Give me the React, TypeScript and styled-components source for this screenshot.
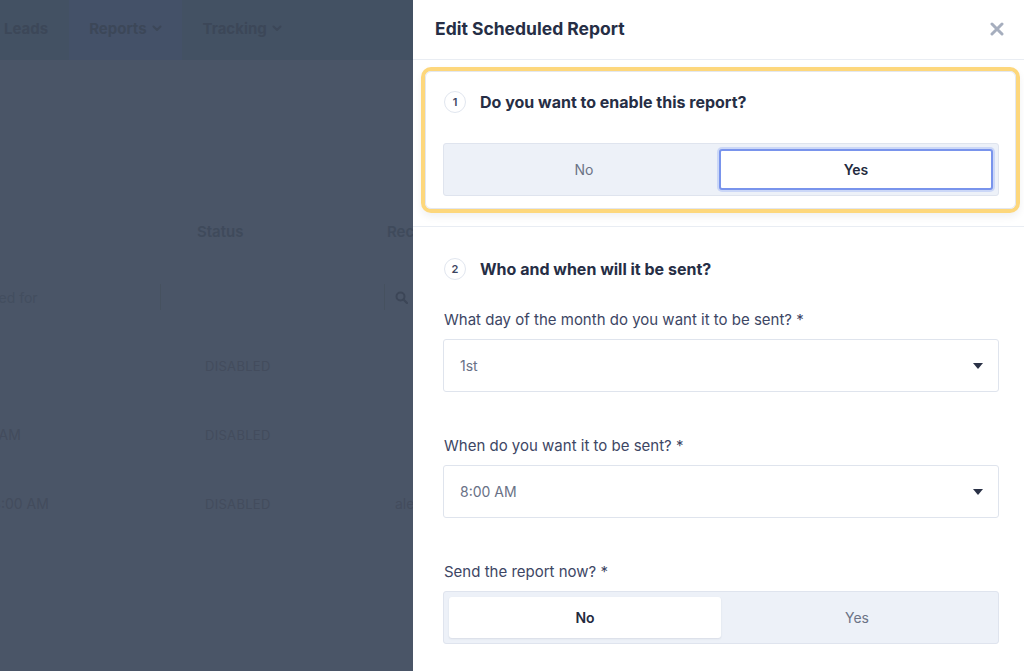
import React from "react";
import styled, { createGlobalStyle, css } from "styled-components";

const Global = createGlobalStyle`
  html, body { margin: 0; padding: 0; }
  body {
    font-family: Inter, "Noto Sans", "Liberation Sans", sans-serif;
    -webkit-font-smoothing: antialiased;
  }
  * { box-sizing: border-box; }
`;

const Page = styled.div`
  display: flex;
  width: 1024px;
  height: 671px;
  overflow: hidden;
`;

/* ---------- dimmed background app ---------- */
const Backdrop = styled.div`
  flex: 0 0 413px;
  background: #4a5567;
  overflow: hidden;
  display: flex;
  flex-direction: column;
`;

const NavBar = styled.nav`
  height: 60px;
  flex: 0 0 60px;
  background: #435163;
  display: flex;
  margin-left: -16px;
`;

const NavItem = styled.div<{ $active?: boolean }>`
  display: flex;
  align-items: center;
  gap: 5px;
  padding: 0 20px 4px;
  font-size: 15px;
  font-weight: 700;
  color: #3c4758;
  white-space: nowrap;
  ${(p) =>
    p.$active &&
    css`
      background: #445168;
    `}
  & + & {
    margin-left: 1px;
  }
`;

const Main = styled.div`
  padding-top: 151px;
  margin-left: -140px;
  display: flex;
  flex-direction: column;
`;

const TableRow = styled.div<{ $h: number }>`
  display: grid;
  grid-template-columns: 301px 224px 1fr;
  height: ${(p) => p.$h}px;
  align-items: center;
  white-space: nowrap;
`;

const HeadCell = styled.div<{ $pad?: number }>`
  font-size: 15px;
  font-weight: 600;
  color: #3f4a5b;
  padding-left: ${(p) => p.$pad ?? 0}px;
`;

const SearchRow = styled.div`
  display: grid;
  grid-template-columns: 301px 224px 1fr;
  height: 26px;
  margin: 33px 0 21px;
`;

const SearchCell = styled.div<{ $divider?: boolean; $pad: number }>`
  display: flex;
  align-items: center;
  padding-left: ${(p) => p.$pad}px;
  font-size: 14px;
  color: #434e5f;
  border-right: ${(p) => (p.$divider ? "1px solid #46515f" : "none")};
  white-space: nowrap;
`;

const BodyCell = styled.div<{ $pad?: number; $upper?: boolean }>`
  font-size: ${(p) => (p.$upper ? 13 : 14)}px;
  color: #434c5d;
  padding-left: ${(p) => p.$pad ?? 0}px;
  letter-spacing: ${(p) => (p.$upper ? "0.3px" : "0")};
`;

/* ---------- drawer ---------- */
const Drawer = styled.aside`
  flex: 1;
  background: #ffffff;
  display: flex;
  flex-direction: column;
`;

const DrawerHeader = styled.header`
  height: 60px;
  flex: 0 0 60px;
  border-bottom: 1px solid #e9edf3;
  display: flex;
  align-items: center;
  justify-content: space-between;
  padding: 0 19px 2px 22px;
`;

const DrawerTitle = styled.h1`
  margin: 0;
  font-size: 17.5px;
  font-weight: 700;
  color: #262e45;
`;

const CloseButton = styled.button`
  border: 0;
  background: none;
  padding: 0;
  width: 16px;
  height: 16px;
  display: flex;
  align-items: center;
  justify-content: center;
  cursor: pointer;
`;

const HighlightSection = styled.section`
  padding: 11px 8px 17px 12px;
  border-bottom: 1px solid #e9edf3;
`;

const HighlightCard = styled.div`
  border: 1px solid #e3e7ef;
  border-radius: 6px;
  padding: 19px 16px 12px 17px;
  box-shadow: 0 0 0 4px #fdd77c, 0 4px 8px 3px rgba(30, 40, 60, 0.08);
`;

const Section = styled.section`
  padding: 31px 25px 0 30px;
  display: flex;
  flex-direction: column;
`;

const StepHeader = styled.div<{ $gap: number }>`
  display: flex;
  align-items: center;
  gap: 14px;
  height: 22px;
  margin-bottom: ${(p) => p.$gap}px;
`;

const StepNumber = styled.span`
  width: 22px;
  height: 22px;
  border-radius: 50%;
  border: 1px solid #e1e6ef;
  display: flex;
  align-items: center;
  justify-content: center;
  font-size: 11px;
  font-weight: 600;
  color: #3c4560;
  margin-left: 1px;
`;

const StepTitle = styled.h2`
  margin: 0;
  font-size: 16px;
  font-weight: 700;
  color: #262e45;
  letter-spacing: 0;
`;

const Fields = styled.div`
  display: flex;
  flex-direction: column;
  gap: 44px;
`;

const Field = styled.div`
  display: flex;
  flex-direction: column;
  gap: 9px;
`;

const Label = styled.label`
  font-size: 15px;
  line-height: 20px;
  color: #3d4664;
  padding-left: 1px;
`;

const SelectBox = styled.div`
  height: 53px;
  border: 1px solid #dfe4ed;
  border-radius: 3px;
  display: flex;
  align-items: center;
  justify-content: space-between;
  padding: 0 15px 0 16px;
  font-size: 14px;
  color: #697186;
`;

const Segmented = styled.div`
  height: 53px;
  background: #edf1f8;
  border: 1px solid #dfe4ee;
  border-radius: 3px;
  padding: 5px;
  display: flex;
`;

const SegmentOption = styled.button<{ $selected?: boolean; $focused?: boolean }>`
  flex: 1;
  border: 0;
  border-radius: 3px;
  background: transparent;
  font-family: inherit;
  font-size: 14px;
  color: #6b7386;
  cursor: pointer;
  ${(p) =>
    p.$selected &&
    css`
      background: #ffffff;
      font-weight: 600;
      color: #232a3e;
      box-shadow: 0 1px 2px rgba(30, 40, 70, 0.1);
    `}
  ${(p) =>
    p.$focused &&
    css`
      border: 2px solid #7994ec;
      box-shadow: 0 0 0 2px rgba(127, 156, 245, 0.3);
    `}
`;

const Caret = () => (
  <svg width="10" height="6" viewBox="0 0 10 6">
    <path d="M0 0h10L5 6z" fill="#2a3146" />
  </svg>
);

const Chevron = () => (
  <svg width="10" height="7" viewBox="0 0 10 7">
    <path d="M1.5 1.5L5 5l3.5-3.5" fill="none" stroke="#3c4758" strokeWidth="2" strokeLinecap="round" strokeLinejoin="round" />
  </svg>
);

const SearchIcon = () => (
  <svg width="13" height="13" viewBox="0 0 13 13">
    <circle cx="5.5" cy="5.5" r="4" fill="none" stroke="#3c4657" strokeWidth="2" />
    <path d="M8.5 8.5L12 12" stroke="#3c4657" strokeWidth="2.2" strokeLinecap="round" />
  </svg>
);

const CloseIcon = () => (
  <svg width="14" height="14" viewBox="0 0 14 14">
    <path d="M2 2l10 10M12 2L2 12" stroke="#a6aebe" strokeWidth="3" strokeLinecap="round" />
  </svg>
);

export default function App() {
  return (
    <>
      <Global />
      <Page>
        <Backdrop>
          <NavBar>
            <NavItem>Leads</NavItem>
            <NavItem $active>
              Reports <Chevron />
            </NavItem>
            <NavItem>
              Tracking <Chevron />
            </NavItem>
          </NavBar>
          <Main>
            <TableRow $h={40}>
              <HeadCell $pad={20}>Schedule</HeadCell>
              <HeadCell $pad={36}>Status</HeadCell>
              <HeadCell $pad={2}>Recipients</HeadCell>
            </TableRow>
            <SearchRow>
              <SearchCell $divider $pad={36}>Search scheduled for</SearchCell>
              <SearchCell $divider $pad={20} />
              <SearchCell $pad={10}>
                <SearchIcon />
              </SearchCell>
            </SearchRow>
            <TableRow $h={69}>
              <BodyCell $pad={20}>Monthly</BodyCell>
              <BodyCell $pad={44} $upper>DISABLED</BodyCell>
              <BodyCell $pad={10}></BodyCell>
            </TableRow>
            <TableRow $h={69}>
              <BodyCell $pad={20}>Weekly, Tue 9:00 AM</BodyCell>
              <BodyCell $pad={44} $upper>DISABLED</BodyCell>
              <BodyCell $pad={10}></BodyCell>
            </TableRow>
            <TableRow $h={69}>
              <BodyCell $pad={20}>Monthly, 15th, at 8:00 AM</BodyCell>
              <BodyCell $pad={44} $upper>DISABLED</BodyCell>
              <BodyCell $pad={10}>alex@example.com</BodyCell>
            </TableRow>
          </Main>
        </Backdrop>

        <Drawer>
          <DrawerHeader>
            <DrawerTitle>Edit Scheduled Report</DrawerTitle>
            <CloseButton aria-label="Close">
              <CloseIcon />
            </CloseButton>
          </DrawerHeader>

          <HighlightSection>
            <HighlightCard>
              <StepHeader $gap={30}>
                <StepNumber>1</StepNumber>
                <StepTitle>Do you want to enable this report?</StepTitle>
              </StepHeader>
              <Segmented>
                <SegmentOption>No</SegmentOption>
                <SegmentOption $selected $focused>
                  Yes
                </SegmentOption>
              </Segmented>
            </HighlightCard>
          </HighlightSection>

          <Section>
            <StepHeader $gap={30}>
              <StepNumber>2</StepNumber>
              <StepTitle>Who and when will it be sent?</StepTitle>
            </StepHeader>
            <Fields>
              <Field>
                <Label>What day of the month do you want it to be sent? *</Label>
                <SelectBox>
                  1st
                  <Caret />
                </SelectBox>
              </Field>
              <Field>
                <Label>When do you want it to be sent? *</Label>
                <SelectBox>
                  8:00 AM
                  <Caret />
                </SelectBox>
              </Field>
              <Field>
                <Label>Send the report now? *</Label>
                <Segmented>
                  <SegmentOption $selected>No</SegmentOption>
                  <SegmentOption>Yes</SegmentOption>
                </Segmented>
              </Field>
            </Fields>
          </Section>
        </Drawer>
      </Page>
    </>
  );
}
